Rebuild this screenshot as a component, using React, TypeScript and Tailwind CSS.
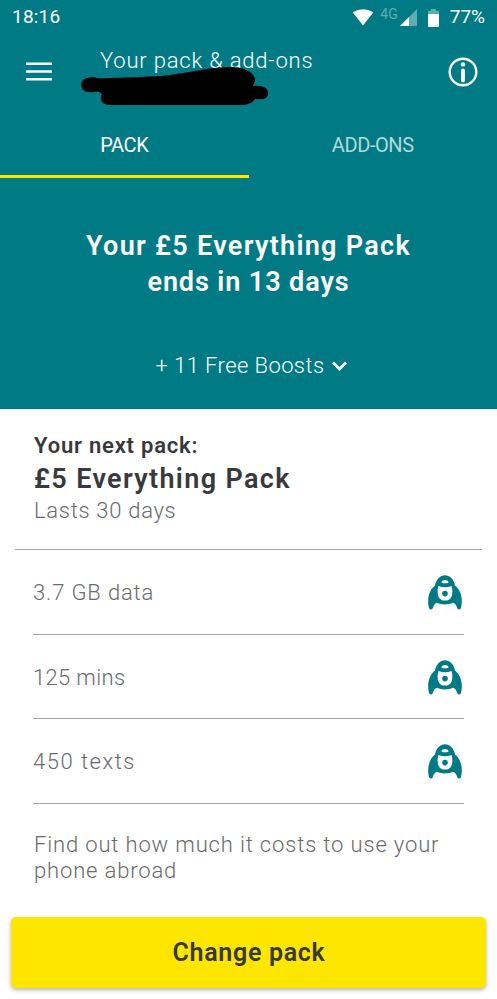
import { ReactNode } from 'react'

const allowances = [
  { label: '3.7 GB data', spacing: 'tracking-[0.85px]' },
  { label: '125 mins', spacing: 'tracking-[0.35px]' },
  { label: '450 texts', spacing: 'tracking-[1.5px]' },
]

function RocketIcon() {
  return (
    <svg width="34" height="35" viewBox="0 0 34 35" className="mr-[2px] shrink-0">
      <path
        d="M17 0.200C12.500 0.200 8 4 7 10.500C3 13.500 0.400 19 0.200 25C0.100 28.500 0.500 31.500 1.200 33.500C1.800 34.900 4 34.900 4.600 33.500C5.500 30.500 6.700 28.500 9 27.800C11.500 29 14 29.400 17 29.400S22.500 29 25 27.800C27.300 28.500 28.500 30.500 29.400 33.500C30 34.900 32.200 34.900 32.800 33.500C33.500 31.500 33.900 28.500 33.800 25C33.600 19 31 13.500 27 10.500C26 4 21.500 0.200 17 0.200Z"
        fill="#007b85"
      />
      <path d="M13.300 7.400C14.600 4.200 19.400 4.200 20.700 7.400Q17 9.200 13.300 7.400Z" fill="#fff" />
      <path d="M10.500 11Q17 13.700 23.500 11C24.700 14.500 24.700 18.700 23.500 21.700C22.200 24.600 20 25.600 17 25.600S11.800 24.600 10.500 21.700C9.300 18.700 9.300 14.500 10.500 11Z" fill="#fff" />
      <circle cx="17" cy="18.600" r="2.800" fill="#007b85" />
    </svg>
  )
}

function StatusBar() {
  return (
    <div className="flex h-[34px] items-center pl-[12px] pr-[12px] pt-px text-[19px] font-[450] text-white">
      <span className="tracking-[0.2px]">18:16</span>
      <svg width="22" height="17" viewBox="0 0 22 18" className="ml-auto">
        <path d="M0 3.500Q11-3 22 3.500L11 17.500Z" fill="#fff" />
      </svg>
      <span className="ml-[6px] -mt-[7px] text-[14px] leading-[18px] font-normal text-[#5dadb3]">4G</span>
      <svg width="17" height="17" viewBox="0 0 17 17" className="ml-[2px]">
        <path d="M17 0V17H0Z" fill="#5dadb3" />
        <path d="M9 8V17H0Z" fill="#fff" />
      </svg>
      <svg width="11" height="18" viewBox="0 0 11 18" className="ml-[11px]">
        <path d="M3 0H8V2H11V5H0V2H3Z" fill="#5dadb3" />
        <path d="M0 5H11V17Q11 18 10 18H1Q0 18 0 17Z" fill="#fff" />
      </svg>
      <span className="ml-[11px]">77%</span>
    </div>
  )
}

function Tab({ children, active }: { children: ReactNode; active?: boolean }) {
  return (
    <div className={`flex flex-1 items-center justify-center border-b-[3px] text-[20px] tracking-[-0.4px] ${active ? 'border-[#ffe600] text-white' : 'border-transparent text-[#b2d8db]'}`}>
      {children}
    </div>
  )
}

export default function App() {
  return (
    <div className="flex h-[999px] w-[497px] flex-col overflow-hidden bg-white font-['Roboto',sans-serif] text-[#6a6b6d]">
      <header className="h-[409px] shrink-0 bg-[#007b85] text-white">
        <StatusBar />
        <div className="flex h-[80px] pl-[26px] pr-[19px]">
          <svg width="26" height="19" viewBox="0 0 26 19" className="mt-[28px]" fill="#fff">
            <path d="M0 0.500H26V3H0ZM0 8.200H26V10.700H0ZM0 15.900H26V18.400H0Z" />
          </svg>
          <div className="relative ml-[48px] mt-[12px]">
            <h1 className="text-[22px] font-[350] leading-[30px] tracking-[0.8px]">Your pack &amp; add-ons</h1>
            <svg width="190" height="40" viewBox="0 0 190 40" className="absolute left-[-20px] top-[19px]">
              <path d="M7 13C11 13 13 11 17 13C20 14 24 13 30 13C50 12 72 12 90 10C112 7 130 2 151 2C164 2 174 7 175 14C175 17 174 18 173 21C183 20 188 23 188 28C188 34 183 35 175 34C172 38 168 40 160 40H30C23 40 20 36 21 32C21 30 22 29 21 28C18 25 13 28 8 27C-1 26-1 15 7 13Z" fill="#000" />
            </svg>
          </div>
          <svg width="30" height="30" viewBox="0 0 30 30" className="ml-auto mt-[23px]">
            <circle cx="15" cy="15" r="13.300" fill="none" stroke="#fff" strokeWidth="2.400" />
            <circle cx="15" cy="7.400" r="2.200" fill="#fff" />
            <path d="M15 13.500V23.500" stroke="#fff" strokeWidth="3.800" strokeLinecap="round" />
          </svg>
        </div>
        <nav className="flex h-[64px]">
          <Tab active>PACK</Tab>
          <Tab>ADD-ONS</Tab>
        </nav>
        <h2 className="mt-[50px] text-center text-[27px] font-semibold leading-[36px] tracking-[1.3px]">
          Your £5 Everything Pack
          <br />
          <span className="tracking-[0.9px]">ends in 13 days</span>
        </h2>
        <div className="mt-[51px] flex items-center justify-center gap-[8px] pl-[6px] text-[22px] font-[350] leading-[30px] tracking-[0.4px]">
          + 11 Free Boosts
          <svg width="15" height="10" viewBox="0 0 15 10">
            <path d="M1 1.500L7.500 8L14 1.500" fill="none" stroke="#fff" strokeWidth="2.800" />
          </svg>
        </div>
      </header>

      <section className="mx-[15px] h-[141px] shrink-0 border-b border-[#a5a5a5] pl-[19px] pt-[23px] text-[#38393d]">
        <p className="text-[22px] font-semibold leading-[28px] tracking-[0.8px]">Your next pack:</p>
        <p className="mt-[1px] text-[27px] font-semibold leading-[36px] tracking-[1.35px]">£5 Everything Pack</p>
        <p className="text-[22px] font-[350] leading-[28px] tracking-[0.7px] text-[#6a6b6d]">Lasts 30 days</p>
      </section>

      <main className="mx-[33px]">
        {allowances.map(({ label, spacing }) => (
          <div key={label} className={`flex h-[84.700px] items-center justify-between border-b border-[#a5a5a5] pt-px text-[22px] font-[350] ${spacing}`}>
            {label}
            <RocketIcon />
          </div>
        ))}
        <p className="mt-[28px] pl-[1px] text-[22px] font-[350] leading-[26px] tracking-[0.85px]">
          Find out how much it costs to use your
          <br />
          phone abroad
        </p>
      </main>

      <button className="mx-[11px] mt-auto mb-[11px] h-[71px] shrink-0 rounded-[5px] bg-[#ffe600] pt-[1px] pl-[1px] text-[25px] font-semibold tracking-[0.7px] text-[#38393d] shadow-[0_2px_4px_rgba(0,0,0,0.3)]">
        Change pack
      </button>
    </div>
  )
}
